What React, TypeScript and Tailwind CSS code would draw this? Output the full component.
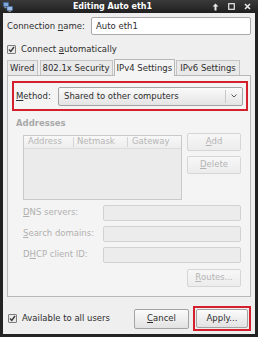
import React from "react";

function Mn(props: { c: string }) {
  return <span className="underline underline-offset-[1px]">{props.c}</span>;
}

function Check() {
  return (
    <div className="w-[9px] h-[9px] border border-[#7d7d7d] bg-[#e9e9e9] rounded-[1px] flex items-center justify-center">
      <svg width="7" height="7" viewBox="0 0 7 7">
        <path d="M1 3.6 L2.8 5.5 L6 1" stroke="#3a3a3a" strokeWidth="1.4" fill="none" />
      </svg>
    </div>
  );
}

function DisabledInput() {
  return (
    <div className="w-[138px] h-[16px] border border-[#d2d2d2] bg-[#ececec] rounded-[2px]" />
  );
}

function GreyButton(props: { children: React.ReactNode }) {
  return (
    <div className="w-[54px] h-[18px] border border-[#d6d6d6] rounded-[2px] bg-gradient-to-b from-[#f7f7f7] to-[#ececec] text-[#b4b4b4] flex items-center justify-center">
      {props.children}
    </div>
  );
}

export default function App() {
  return (
    <div
      className="w-[258px] h-[337px] bg-[#232323] flex flex-col text-[8.5px] text-[#2e2e2e] leading-none overflow-hidden"
      style={{ fontFamily: '"DejaVu Sans", Verdana, sans-serif' }}
    >
      {/* title bar */}
      <div className="h-[13px] flex items-center bg-gradient-to-b from-[#3a3a3a] to-[#202020] shrink-0">
        <svg className="ml-[3px]" width="10" height="10" viewBox="0 0 10 10">
          <rect x="0.5" y="0.5" width="5" height="4" fill="#7fa6d6" stroke="#3f6aa8" strokeWidth="0.6" />
          <rect x="4" y="4.5" width="5.5" height="4" fill="#9dbde6" stroke="#3f6aa8" strokeWidth="0.6" />
          <rect x="1.5" y="5" width="2" height="1.2" fill="#9a9a9a" />
          <rect x="5.5" y="8.6" width="2.5" height="1.2" fill="#9a9a9a" />
        </svg>
        <div className="flex-1 text-center text-white font-bold text-[8px]">Editing Auto eth1</div>
        <div className="flex items-center gap-[9px] mr-[7px]">
          <svg width="7" height="8" viewBox="0 0 7 8">
            <path d="M3.5 0.5 L6.5 3.5 H4.5 V7.5 H2.5 V3.5 H0.5 Z" fill="#e8e8e8" />
          </svg>
          <svg width="7" height="7" viewBox="0 0 7 7">
            <rect x="0.7" y="0.7" width="5.6" height="5.6" fill="none" stroke="#e8e8e8" strokeWidth="1.2" />
          </svg>
          <svg width="7" height="7" viewBox="0 0 7 7">
            <path d="M1 1 L6 6 M6 1 L1 6" stroke="#e8e8e8" strokeWidth="1.6" />
          </svg>
        </div>
      </div>

      {/* body */}
      <div className="flex-1 mx-[3px] mb-[3px] bg-[#efefef] px-[4px] flex flex-col">
        <div className="mt-[4px] h-[18px] flex items-center">
          <div className="w-[84px]">
            Connection <Mn c="n" />ame:
          </div>
          <div className="flex-1 h-[18px] border border-[#a9a9a9] bg-white rounded-[2px] flex items-center pl-[4px]">
            Auto eth1
          </div>
        </div>

        <div className="mt-[8px] h-[12px] flex items-center gap-[5px]">
          <Check />
          <span>
            Connect <Mn c="a" />utomatically
          </span>
        </div>

        {/* tabs */}
        <div className="mt-[3px] flex items-end h-[17px]">
          <div className="h-[15px] px-[2px] mr-[2px] border border-b-0 border-[#c4c4c4] bg-[#e9e9e9] flex items-center">Wired</div>
          <div className="h-[15px] px-[2px] mr-[1px] border border-b-0 border-[#c4c4c4] bg-[#e9e9e9] flex items-center">802.1x Security</div>
          <div className="h-[17px] px-[2px] border border-b-0 border-[#b8b8b8] bg-[#f4f4f4] flex items-center -mb-px relative z-10">IPv4 Settings</div>
          <div className="h-[15px] px-[3px] ml-[1px] border border-b-0 border-[#c4c4c4] bg-[#e9e9e9] flex items-center">IPv6 Settings</div>
        </div>

        {/* tab panel */}
        <div className="h-[222px] border border-[#b8b8b8] bg-[#f4f4f4] flex flex-col pl-[4px] pr-[2px]">
          <div className="mt-[5px] h-[30px] border-2 border-[#d4202c] flex items-center pl-[2px] pr-[3px]">
            <div className="w-[42px]">
              <Mn c="M" />ethod:
            </div>
            <div className="flex-1 h-[19px] border border-[#a4a4a4] rounded-[2px] bg-gradient-to-b from-[#fafafa] to-[#e4e4e4] flex items-center">
              <div className="flex-1 pl-[5px]">Shared to other computers</div>
              <div className="w-px h-[13px] bg-[#c8c8c8]" />
              <svg className="mx-[5px]" width="6" height="4" viewBox="0 0 6 4">
                <path d="M0.5 0.5 L3 3 L5.5 0.5" stroke="#555" strokeWidth="1" fill="none" />
              </svg>
            </div>
          </div>

          <div className="mt-[8px] ml-[4px] font-bold text-[#a9a9a9]">Addresses</div>

          <div className="mt-[7px] ml-[11px] flex">
            <div className="w-[159px] h-[65px] border border-[#cacaca] bg-[#ebebeb] flex flex-col">
              <div className="h-[13px] flex items-center bg-gradient-to-b from-[#f8f8f8] to-[#ededed] border-b border-[#dcdcdc] text-[#b6b6b6]">
                <div className="w-[50px] pl-[4px] border-r border-[#d4d4d4] h-[10px] flex items-center">Address</div>
                <div className="w-[54px] pl-[3px] border-r border-[#d4d4d4] h-[10px] flex items-center">Netmask</div>
                <div className="flex-1 pl-[4px]">Gateway</div>
              </div>
            </div>
            <div className="ml-[5px] flex flex-col gap-[5px] -mt-[2px]">
              <GreyButton>
                <Mn c="A" />dd
              </GreyButton>
              <GreyButton>
                <Mn c="D" />elete
              </GreyButton>
            </div>
          </div>

          <div className="mt-[5px] ml-[11px] flex flex-col gap-[5px] text-[#b0b0b0]">
            <div className="flex items-center">
              <div className="w-[80px]">
                <Mn c="D" />NS servers:
              </div>
              <DisabledInput />
            </div>
            <div className="flex items-center">
              <div className="w-[80px]">
                <Mn c="S" />earch domains:
              </div>
              <DisabledInput />
            </div>
            <div className="flex items-center">
              <div className="w-[80px]">
                D<Mn c="H" />CP client ID:
              </div>
              <DisabledInput />
            </div>
          </div>

          <div className="mt-[6px] ml-[175px]">
            <GreyButton>
              <Mn c="R" />outes...
            </GreyButton>
          </div>
        </div>

        {/* bottom */}
        <div className="flex-1 flex items-center pt-[6px]">
          <div className="flex items-center gap-[5px] ml-[1px]">
            <Check />
            <span>Available to all users</span>
          </div>
          <div className="ml-auto flex items-center gap-[4px]">
            <div className="w-[55px] h-[20px] border border-[#a3a3a3] rounded-[2px] bg-gradient-to-b from-[#fbfbfb] to-[#e2e2e2] flex items-center justify-center">
              <span>
                <Mn c="C" />ancel
              </span>
            </div>
            <div className="w-[58px] h-[25px] border-2 border-[#d4202c] p-[1px]">
              <div className="w-full h-full border border-[#a3a3a3] rounded-[2px] bg-gradient-to-b from-[#fbfbfb] to-[#e2e2e2] flex items-center justify-center">
                Apply...
              </div>
            </div>
          </div>
        </div>
      </div>
    </div>
  );
}
